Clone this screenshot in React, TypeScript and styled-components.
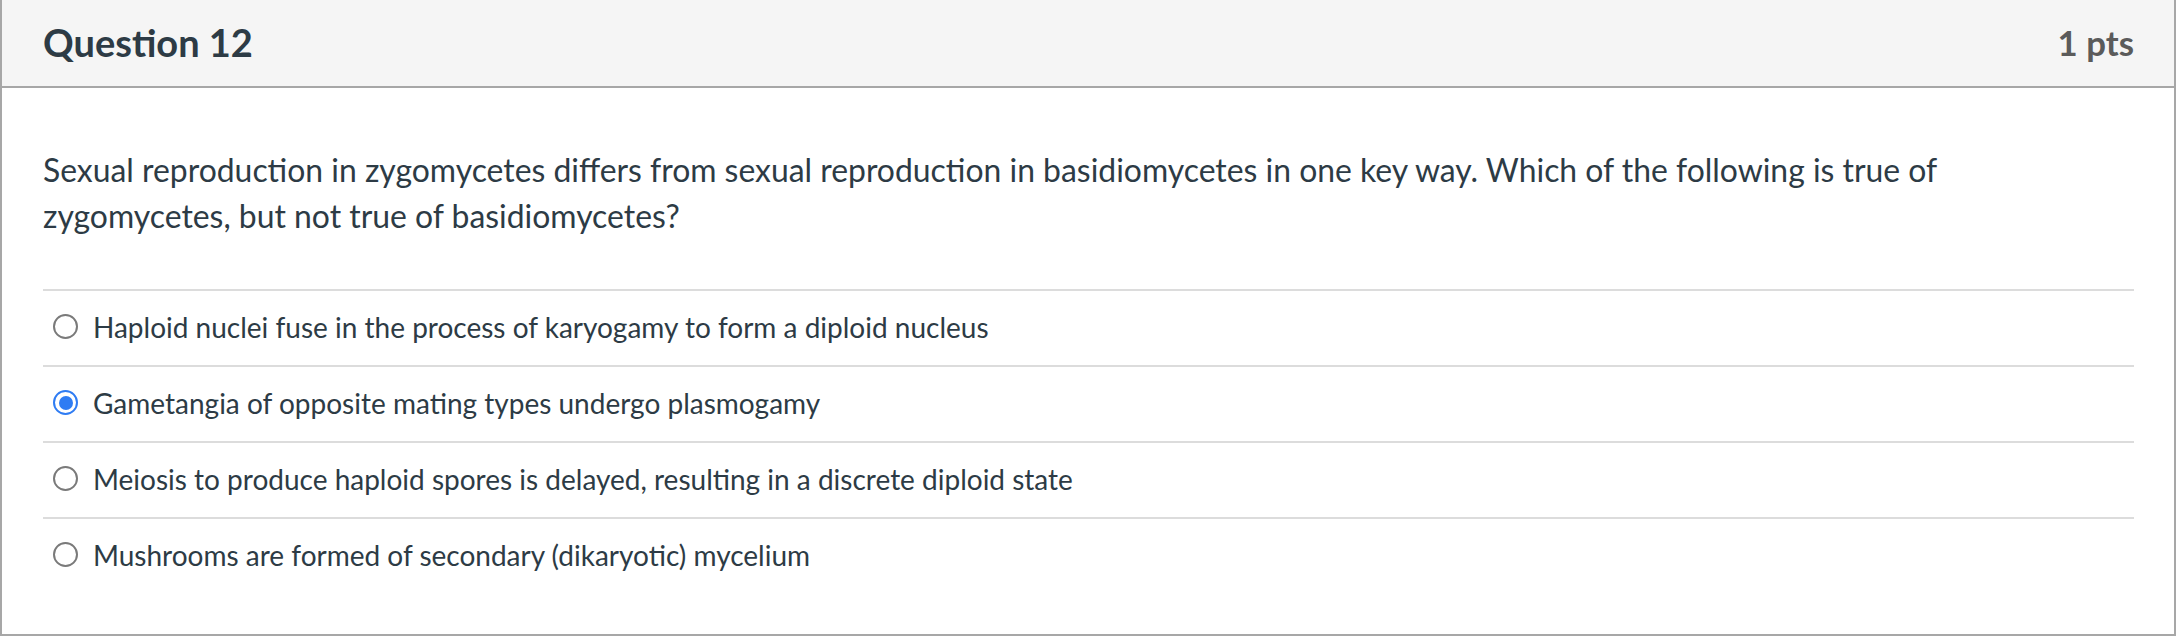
import React from "react";
import styled, { createGlobalStyle } from "styled-components";

const Global = createGlobalStyle`
  html, body { margin: 0; padding: 0; background: #ffffff; }
  body { font-family: Lato, "Open Sans", "Liberation Sans", sans-serif; }
  * { box-sizing: border-box; }
`;

const Card = styled.section`
  width: 2176px;
  height: 636px;
  border: 2px solid #a7a7a7;
  border-top: none;
  background: #ffffff;
  display: flex;
  flex-direction: column;
`;

const Header = styled.header`
  height: 88px;
  flex: none;
  background: #f5f5f5;
  border-bottom: 2px solid #a7a7a7;
  display: flex;
  align-items: center;
  justify-content: space-between;
  padding: 0 40px 2px 41px;
`;

const Title = styled.h2`
  margin: 0;
  font-family: Lato, sans-serif;
  font-weight: 700;
  font-size: 38px;
  color: #2d3b45;
`;

const Points = styled.div`
  font-family: Lato, sans-serif;
  font-weight: 700;
  font-size: 34.8px;
  color: #5b5b5b;
`;

const Body = styled.div`
  padding: 59px 40px 0 41px;
`;

const QuestionText = styled.p`
  margin: 0;
  padding-right: 40px;
  font-family: Lato, sans-serif;
  font-size: 31.9px;
  line-height: 46px;
  color: #2d3b45;
`;

const Answers = styled.div`
  margin-top: 50px;
  display: flex;
  flex-direction: column;
`;

const AnswerRow = styled.label`
  height: 76px;
  border-top: 2px solid #dcdcdc;
  display: flex;
  align-items: center;
  gap: 15px;
  padding: 0 0 3px 10px;
  font-family: Lato, sans-serif;
  font-size: 28px;
  color: #2d3b45;
`;

const Radio = styled.span<{ $checked?: boolean }>`
  flex: none;
  width: 25px;
  height: 25px;
  border-radius: 50%;
  border: 2px solid ${(p) => (p.$checked ? "#2f7cf3" : "#7a7a7a")};
  display: flex;
  align-items: center;
  justify-content: center;
  &::after {
    content: "";
    width: 14px;
    height: 14px;
    border-radius: 50%;
    background: #2f7cf3;
    display: ${(p) => (p.$checked ? "block" : "none")};
  }
`;

const answers = [
  { text: "Haploid nuclei fuse in the process of karyogamy to form a diploid nucleus", checked: false },
  { text: "Gametangia of opposite mating types undergo plasmogamy", checked: true },
  { text: "Meiosis to produce haploid spores is delayed, resulting in a discrete diploid state", checked: false },
  { text: "Mushrooms are formed of secondary (dikaryotic) mycelium", checked: false },
];

export default function App() {
  return (
    <>
      <Global />
      <Card>
        <Header>
          <Title>Question 12</Title>
          <Points>1 pts</Points>
        </Header>
        <Body>
          <QuestionText>
            Sexual reproduction in zygomycetes differs from sexual reproduction in basidiomycetes in one key way. Which of the following is true of zygomycetes, but not true of basidiomycetes?
          </QuestionText>
          <Answers>
            {answers.map((a) => (
              <AnswerRow key={a.text}>
                <Radio $checked={a.checked} />
                <span>{a.text}</span>
              </AnswerRow>
            ))}
          </Answers>
        </Body>
      </Card>
    </>
  );
}
